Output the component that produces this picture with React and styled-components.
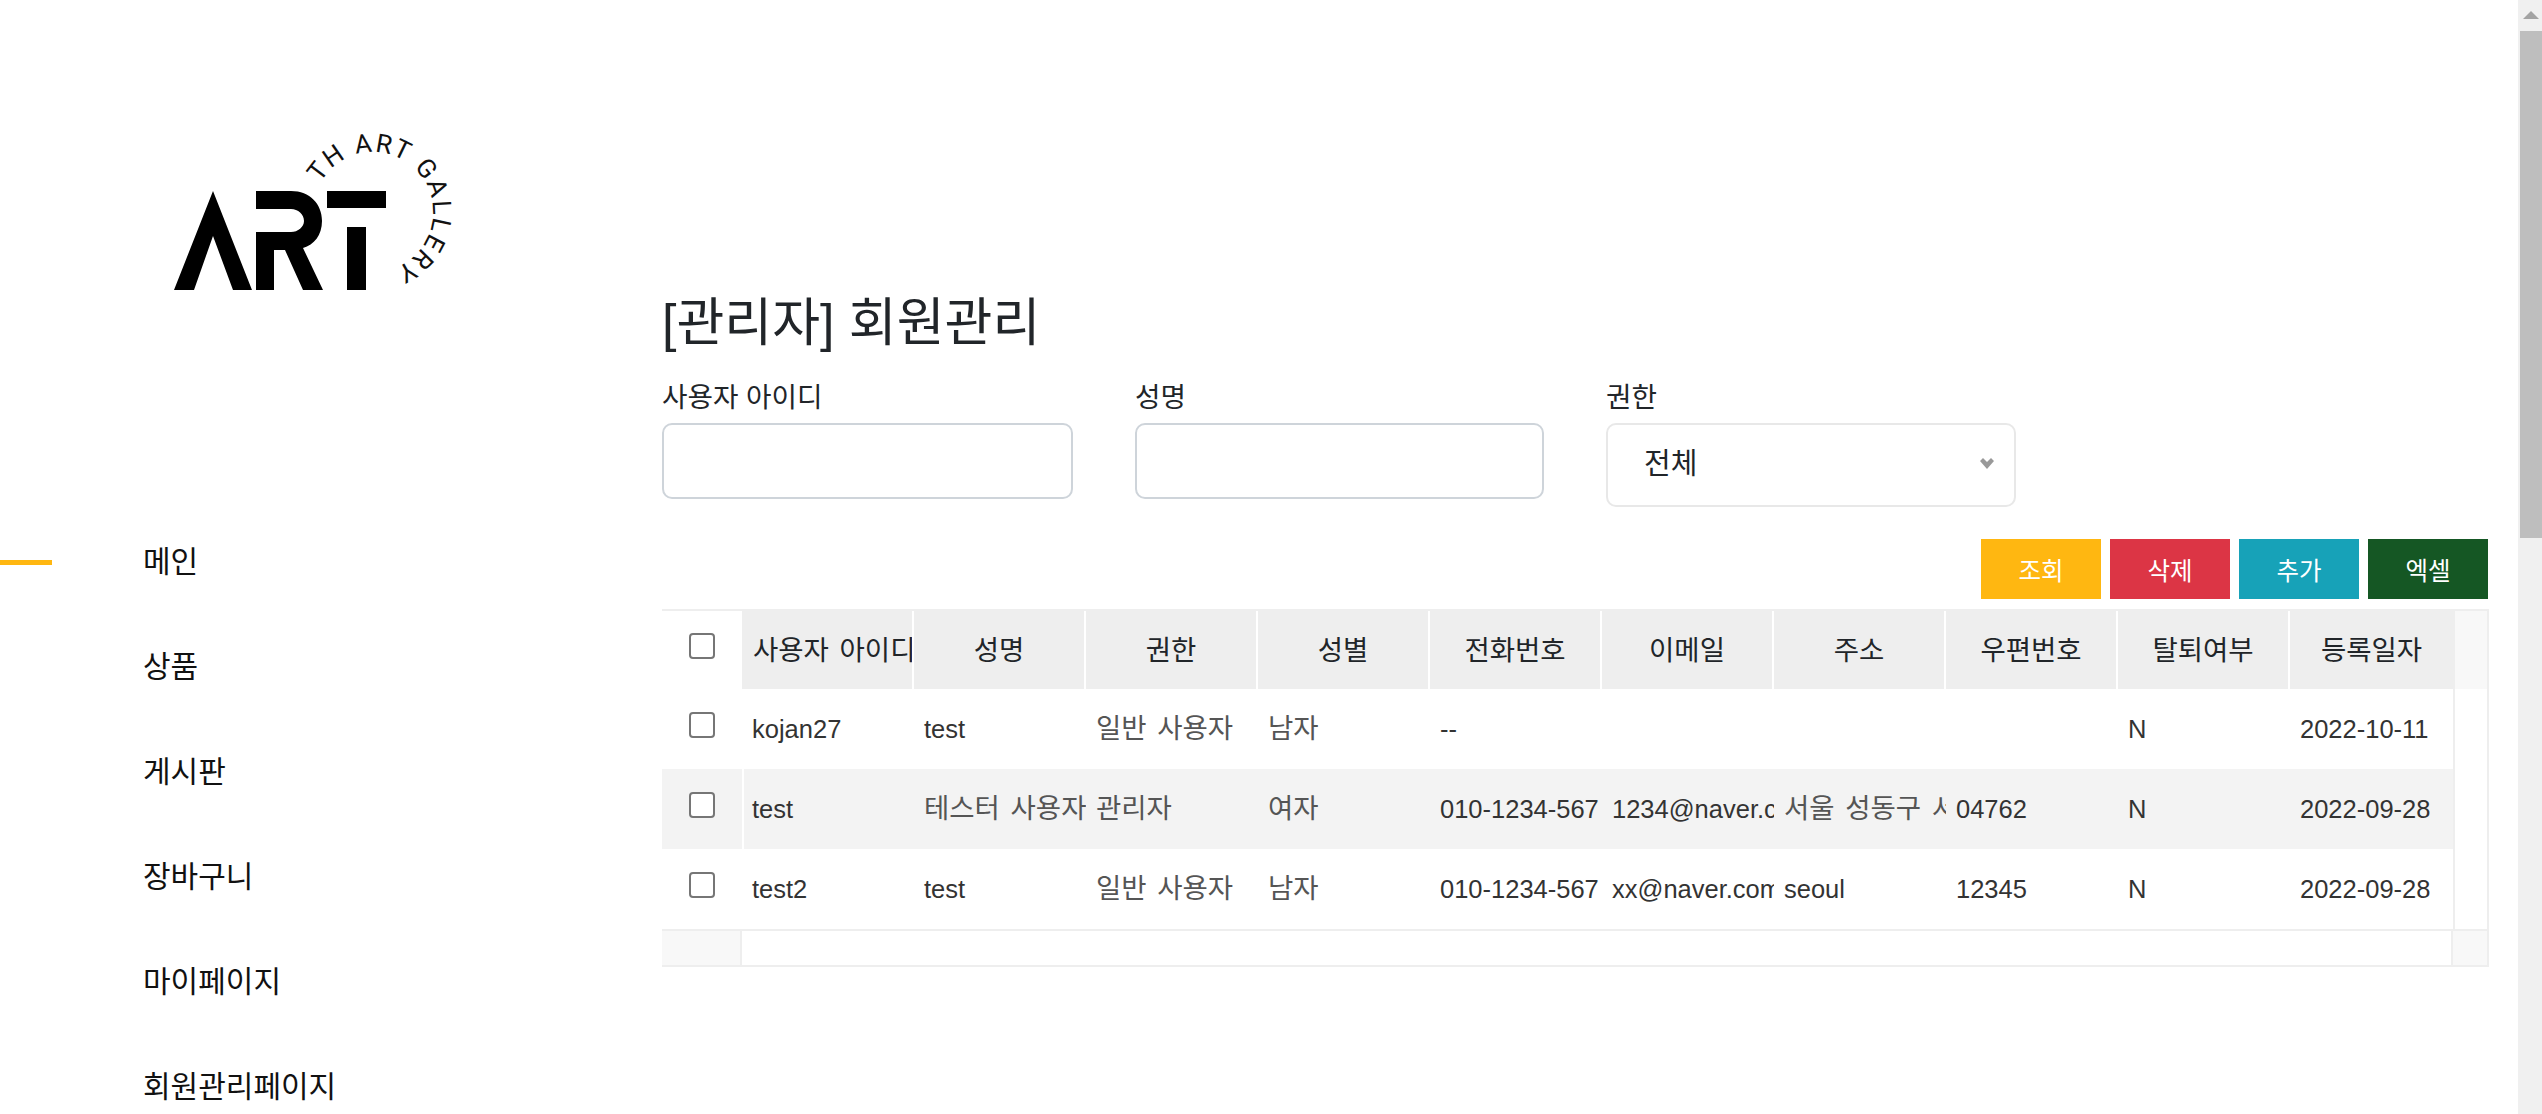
import React from "react";
import styled, { createGlobalStyle } from "styled-components";

const FONT = `"Liberation Sans", "Noto Sans CJK KR", sans-serif`;

const GlobalStyle = createGlobalStyle`
  html, body {
    margin: 0;
    height: 100%;
    overflow: hidden;
    background: #fff;
    font-family: ${FONT};
    color: #212529;
  }
  * {
    box-sizing: border-box;
  }
`;

const Page = styled.div`
  display: flex;
  width: 100%;
  height: 100vh;
  overflow: hidden;
`;

// 왼쪽 메뉴
const Sidebar = styled.aside`
  flex: 0 0 662px;
  padding-top: 125px;
`;
const LogoBox = styled.div`
  height: 180px;
  padding-left: 160px;
  svg {
    display: block;
  }
`;
const Nav = styled.ul`
  margin: 204px 0 0;
  padding: 0;
  list-style: none;
`;
const NavItem = styled.li`
  position: relative;
  height: 105px;
  padding-left: 143px;
  line-height: 105px;
  font-size: 30px;
  color: #111;
  white-space: nowrap;
  &::before {
    content: "";
    display: ${(p) => (p.$active ? "block" : "none")};
    position: absolute;
    left: 0;
    top: 51px;
    width: 52px;
    height: 5px;
    background: #ffb711;
  }
`;

// 본문
const Main = styled.main`
  flex: 1;
  min-width: 0;
  padding: 293px 29px 0 0;
`;
const Title = styled.h2`
  margin: 0;
  height: 60px;
  line-height: 60px;
  font-size: 52px;
  font-weight: 400;
`;
const Filters = styled.div`
  display: flex;
  gap: 62px;
  height: 186px;
  align-items: flex-start;
`;
const Field = styled.label`
  display: block;
  width: ${(p) => p.$width}px;
`;
const FieldName = styled.div`
  height: 70px;
  padding-top: 27px;
  line-height: 36px;
  font-size: 27.7px;
`;
const TextInput = styled.input`
  display: block;
  width: 100%;
  height: 76px;
  border: 2px solid #ced4da;
  border-radius: 10px;
  background: #fff;
  outline: none;
`;
const SelectWrap = styled.div`
  position: relative;
`;
const Select = styled.select`
  display: block;
  width: 100%;
  height: 84px;
  padding: 0 36px 2px;
  border: 2px solid #e8e8e8;
  border-radius: 10px;
  background: #fff;
  appearance: none;
  outline: none;
  font-family: ${FONT};
  font-size: 29px;
  color: #212529;
`;
const Chevron = styled.svg`
  position: absolute;
  right: 22px;
  top: 35px;
`;
const Toolbar = styled.div`
  display: flex;
  justify-content: flex-end;
  gap: 9px;
  padding-right: 1px;
`;
const Button = styled.button`
  width: 120px;
  height: 60px;
  border: 0;
  padding: 0;
  background: ${(p) => p.$bg};
  color: #fff;
  font-family: ${FONT};
  font-size: 24.5px;
`;

// 그리드
const Grid = styled.div`
  margin-top: 10px;
  border-top: 2px solid #eee;
  border-right: 2px solid #eee;
  border-bottom: 2px solid #eee;
`;
const Row = styled.div`
  display: flex;
  height: ${(p) => p.$height}px;
  background: ${(p) => p.$bg || "#fff"};
`;
const CheckCell = styled.div`
  flex: 0 0 80px;
  display: flex;
  justify-content: center;
  padding-top: ${(p) => (p.$head ? 22 : 23)}px;
  box-shadow: ${(p) => (p.$rule ? "2px 0 0 #fff" : "none")};
`;
const Checkbox = styled.input.attrs({ type: "checkbox" })`
  appearance: none;
  width: 26px;
  height: 26px;
  margin: 0;
  border: 2px solid #767676;
  border-radius: 4px;
  background: #fff;
`;
const Cell = styled.div`
  flex: 0 0 172px;
  height: 100%;
  padding-left: 10px;
  line-height: 80px;
  overflow: hidden;
  white-space: nowrap;
  font-size: ${(p) => (p.$kor ? "27.5px" : "25.5px")};
  word-spacing: ${(p) => (p.$kor ? "3px" : "0")};
  color: ${(p) => (p.$kor ? "#555" : "#333")};
`;
const HeadCell = styled.div`
  flex: 0 0 172px;
  height: 100%;
  padding: ${(p) => (p.$left ? "0 0 0 11px" : "0")};
  border-right: 2px solid #fff;
  background: #eee;
  line-height: 80px;
  overflow: hidden;
  white-space: nowrap;
  text-align: ${(p) => (p.$left ? "left" : "center")};
  font-size: 27.5px;
  word-spacing: 3px;
  color: #212529;
  &:last-of-type {
    flex-basis: 163px;
    border-right: 0;
  }
`;
const Gutter = styled.div`
  flex: 1;
  border-left: 2px solid #eee;
  background: ${(p) => p.$bg || "#fff"};
`;
const Cells = styled.div`
  display: flex;
  flex: 0 0 1711px;
  overflow: hidden;
`;
const Foot = styled.div`
  display: flex;
  height: 36px;
  border-top: 2px solid #eee;
  border-left: 2px solid #eee;
`;
const FootLeft = styled.div`
  flex: 0 0 80px;
  margin-left: -2px;
  border-right: 2px solid #eee;
  background: #f8f8f8;
`;
const FootMid = styled.div`
  flex: 0 0 1709px;
`;

// 스크롤바
const Scrollbar = styled.div`
  flex: 0 0 24px;
  padding-left: 2px;
  background: #f0f0f0;
`;
const ScrollArrow = styled.div`
  display: flex;
  justify-content: center;
  height: 31px;
  padding-top: 11px;
`;
const ScrollThumb = styled.div`
  height: 507px;
  background: #bebebe;
`;

const HEADS = ["사용자 아이디", "성명", "권한", "성별", "전화번호", "이메일", "주소", "우편번호", "탈퇴여부", "등록일자"];
const ROWS = [
  ["kojan27", "test", "일반 사용자", "남자", "--", "", "", "", "N", "2022-10-11"],
  ["test", "테스터 사용자", "관리자", "여자", "010-1234-567", "1234@naver.com", "서울 성동구 서울숲길", "04762", "N", "2022-09-28"],
  ["test2", "test", "일반 사용자", "남자", "010-1234-567", "xx@naver.com", "seoul", "12345", "N", "2022-09-28"],
];
const BUTTONS = [
  ["조회", "#ffb711"],
  ["삭제", "#dc3545"],
  ["추가", "#17a2b8"],
  ["엑셀", "#155724"],
];
const MENUS = ["메인", "상품", "게시판", "장바구니", "마이페이지", "회원관리페이지"];
const HANGUL = /[가-힣]/;

function Logo() {
  return (
    <svg width="320" height="180" viewBox="160 125 320 180">
      <path d="M213 191 L252 290 H233 L213 236 L194 290 H174 Z" fill="#000" />
      <path d="M256 191 H291 C310 191 322 204 322 221 C322 235 314 245 303 248 L323 290 H303 L285 250 H274 V290 H256 V232 H291 C298 232 304 227 304 221 C304 214 298 209 291 209 H256 Z" fill="#000" />
      <path d="M327 191 H386 V208 H327 Z M347 227 H366 V290 H347 Z" fill="#000" />
      <defs>
        <path id="logo-arc" d="M320.5 183 A60 60 0 1 1 373 272" />
      </defs>
      <text fontFamily="Roboto, sans-serif" fontSize="26" letterSpacing="2" fill="#111">
        <textPath href="#logo-arc">TH ART GALLERY</textPath>
      </text>
    </svg>
  );
}

function App() {
  return (
    <Page>
      <GlobalStyle />
      <Sidebar>
        <LogoBox>
          <Logo />
        </LogoBox>
        <Nav>
          {MENUS.map((m, i) => (
            <NavItem key={m} $active={i === 0}>{m}</NavItem>
          ))}
        </Nav>
      </Sidebar>
      <Main>
        <Title>[관리자] 회원관리</Title>
        <Filters>
          <Field $width={411}>
            <FieldName>사용자 아이디</FieldName>
            <TextInput />
          </Field>
          <Field $width={409}>
            <FieldName>성명</FieldName>
            <TextInput />
          </Field>
          <Field $width={410}>
            <FieldName>권한</FieldName>
            <SelectWrap>
              <Select defaultValue="all">
                <option value="all">전체</option>
              </Select>
              <Chevron width="14" height="11" viewBox="0 0 14 11">
                <path d="M0 3 L3 0 L7 4 L11 0 L14 3 L7 11 Z" fill="#999" />
              </Chevron>
            </SelectWrap>
          </Field>
        </Filters>
        <Toolbar>
          {BUTTONS.map(([label, bg]) => (
            <Button key={label} $bg={bg}>{label}</Button>
          ))}
        </Toolbar>
        <Grid>
          <Row $height={78}>
            <CheckCell $head><Checkbox /></CheckCell>
            <Cells>
              {HEADS.map((h, i) => (
                <HeadCell key={h} $left={i === 0}>{h}</HeadCell>
              ))}
            </Cells>
            <Gutter $bg="#f8f8f8" />
          </Row>
          {ROWS.map((r, i) => (
            <Row key={i} $height={80} $bg={i === 1 ? "#f3f3f3" : "#fff"}>
              <CheckCell $rule={i === 1}><Checkbox /></CheckCell>
              <Cells>
                {r.map((c, j) => (
                  <Cell key={j} $kor={HANGUL.test(c)}>{c}</Cell>
                ))}
              </Cells>
              <Gutter />
            </Row>
          ))}
          <Foot>
            <FootLeft />
            <FootMid />
            <Gutter $bg="#f8f8f8" />
          </Foot>
        </Grid>
      </Main>
      <Scrollbar>
        <ScrollArrow>
          <svg width="16" height="8" viewBox="0 0 16 8">
            <path d="M8 0 L16 8 H0 Z" fill="#a3a3a3" />
          </svg>
        </ScrollArrow>
        <ScrollThumb />
      </Scrollbar>
    </Page>
  );
}

export default App;
